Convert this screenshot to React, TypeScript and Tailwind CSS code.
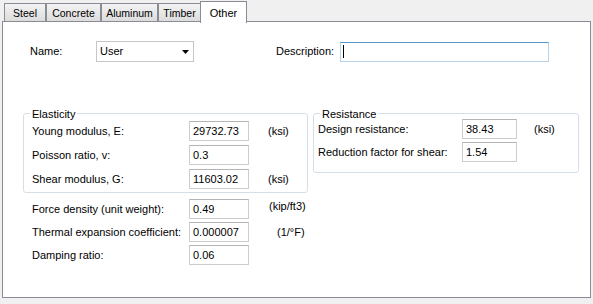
import React from 'react';

const font = { fontFamily: '"Liberation Sans", Arial, sans-serif' };

function Field({ value, w = 'w-[60px]' }: { value: string; w?: string }) {
    return (
        <div className={`${w} h-[20px] shrink-0 border border-[#cdcdcd] border-t-[#b4b4b4] bg-white pl-[3px] flex items-center leading-none`}>
            {value}
        </div>
    );
}

function Tab({ label, w, active }: { label: string; w: string; active?: boolean }) {
    if (active) {
        return (
            <div className={`${w} relative z-10 h-[22px] mt-[1px] -mb-[1px] -ml-[1px] text-center pt-[3px] bg-white border border-b-0 border-[#898c95]`}>
                {label}
            </div>
        );
    }
    return (
        <div className={`${w} h-[18px] mt-[3px] text-center text-[10.5px] pt-[2px] whitespace-nowrap border border-b-0 border-[#898c95] bg-gradient-to-b from-[#f3f3f3] to-[#dcdcdc]`}>
            {label}
        </div>
    );
}

export default function App() {
    return (
        <div className="w-[593px] h-[304px] bg-[#f0f0f0] text-[11px] text-black overflow-hidden" style={font}>
            {/* tab strip */}
            <div className="flex items-start pl-[4px] h-[21px]">
                <Tab label="Steel" w="w-[42px]" />
                <Tab label="Concrete" w="w-[55px]" />
                <Tab label="Aluminum" w="w-[57px]" />
                <Tab label="Timber" w="w-[43px]" />
                <Tab label="Other" w="w-[47px]" active />
            </div>

            {/* page */}
            <div className="ml-[2px] w-[589px] h-[277px] border border-[#898c95] bg-white">
                {/* name / description */}
                <div className="flex items-center mt-[19px] pl-[27px]">
                    <div className="w-[66px]">Name:</div>
                    <div className="w-[98px] h-[21px] border border-[#c6c6c6] flex items-center justify-between pl-[3px] pr-[4px]">
                        <span>User</span>
                        <svg width="7" height="4" viewBox="0 0 7 4">
                            <path d="M0 0H7L3.5 4Z" fill="#000" />
                        </svg>
                    </div>
                    <div className="ml-[82px] w-[64px]">Description:</div>
                    <div className="w-[209px] h-[20px] border border-[#b6d5ec] border-t-[#5a96c3] flex items-center pl-[2px]">
                        <div className="w-[1px] h-[13px] bg-black" />
                    </div>
                </div>

                {/* groups */}
                <div className="flex items-start mt-[51px] pl-[20px] gap-[5px]">
                    <div className="relative w-[285px] h-[80px] border border-[#d5dfe5] rounded-[3px] pl-[8px] pt-[7px] flex flex-col gap-[4px]">
                        <span className="absolute -top-[8px] left-[6px] px-[2px] bg-white">Elasticity</span>
                        <div className="flex items-center">
                            <div className="w-[157px]">Young modulus, E:</div>
                            <Field value="29732.73" />
                            <div className="ml-[19px]">(ksi)</div>
                        </div>
                        <div className="flex items-center">
                            <div className="w-[157px]">Poisson ratio, v:</div>
                            <Field value="0.3" />
                        </div>
                        <div className="flex items-center">
                            <div className="w-[157px]">Shear modulus, G:</div>
                            <Field value="11603.02" />
                            <div className="ml-[19px]">(ksi)</div>
                        </div>
                    </div>

                    <div className="relative w-[266px] h-[60px] border border-[#d5dfe5] rounded-[3px] pl-[4px] pt-[5px] flex flex-col gap-[3px]">
                        <span className="absolute -top-[8px] left-[6px] px-[2px] bg-white">Resistance</span>
                        <div className="flex items-center">
                            <div className="w-[144px]">Design resistance:</div>
                            <Field value="38.43" w="w-[55px]" />
                            <div className="ml-[17px]">(ksi)</div>
                        </div>
                        <div className="flex items-center">
                            <div className="w-[144px]">Reduction factor for shear:</div>
                            <Field value="1.54" w="w-[55px]" />
                        </div>
                    </div>
                </div>

                {/* general properties */}
                <div className="mt-[6px] pl-[29px] flex flex-col gap-[3px]">
                    <div className="flex items-center">
                        <div className="w-[157px]">Force density (unit weight):</div>
                        <Field value="0.49" />
                        <div className="ml-[20px] -mt-[6px]">(kip/ft3)</div>
                    </div>
                    <div className="flex items-center">
                        <div className="w-[157px]">Thermal expansion coefficient:</div>
                        <Field value="0.000007" />
                        <div className="ml-[28px]">(1/°F)</div>
                    </div>
                    <div className="flex items-center">
                        <div className="w-[157px]">Damping ratio:</div>
                        <Field value="0.06" />
                    </div>
                </div>
            </div>
        </div>
    );
}
